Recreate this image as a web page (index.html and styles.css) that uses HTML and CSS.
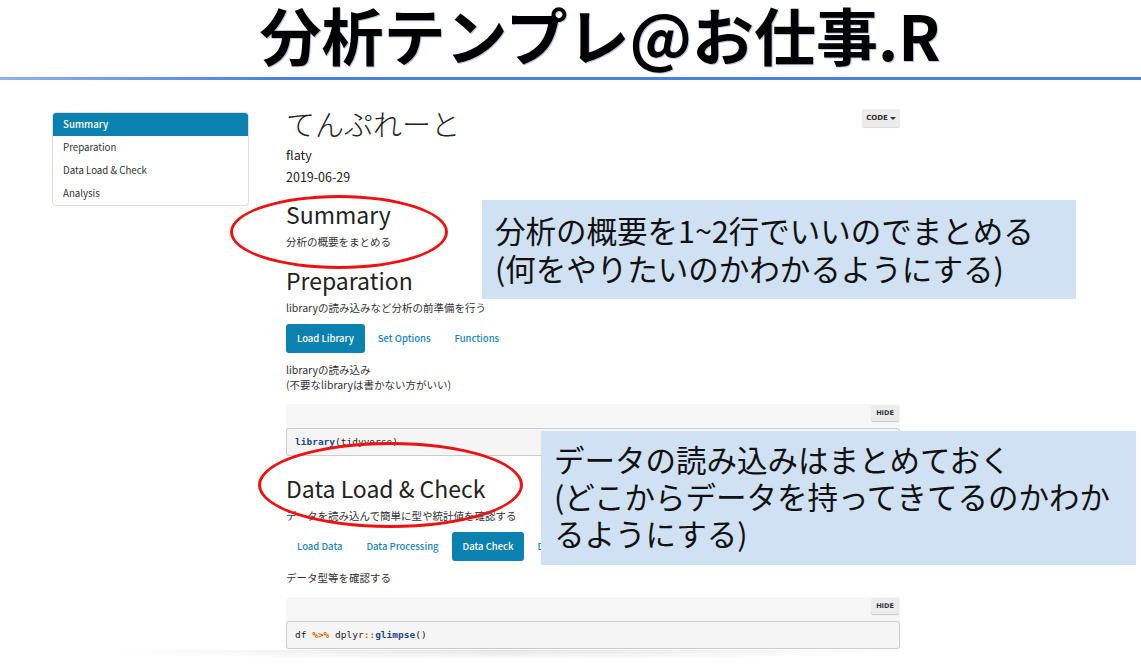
FILE: index.html
```html
<!DOCTYPE html>
<html lang="ja">
<head>
<meta charset="utf-8">
<title>分析テンプレ@お仕事.R</title>
<link rel="stylesheet" href="styles.css">
</head>
<body>
<div class="slide">
  <header class="slide-head">
    <h1 class="slide-title">分析テンプレ@お仕事.R</h1>
  </header>
  <div class="rule"></div>

  <div class="doc">
    <nav class="toc">
      <a class="toc-item active">Summary</a>
      <a class="toc-item">Preparation</a>
      <a class="toc-item">Data Load &amp; Check</a>
      <a class="toc-item">Analysis</a>
    </nav>

    <main class="content">
      <div class="title-row">
        <h1 class="doc-title">てんぷれーと</h1>
        <button class="code-btn">CODE <span class="caret"></span></button>
      </div>
      <p class="meta">flaty</p>
      <p class="meta">2019-06-29</p>

      <h2 class="sec sec-summary">Summary</h2>
      <p class="txt t-sum">分析の概要をまとめる</p>

      <h2 class="sec sec-prep">Preparation</h2>
      <p class="txt t-prep">libraryの読み込みなど分析の前準備を行う</p>
      <div class="tabs">
        <a class="tab active">Load Library</a>
        <a class="tab">Set Options</a>
        <a class="tab">Functions</a>
      </div>
      <p class="txt t-lib">libraryの読み込み<br>(不要なlibraryは書かない方がいい)</p>
      <div class="code code1">
        <div class="code-bar"><button class="hide-btn">HIDE</button></div>
        <pre class="pre"><span class="fn">library</span>(tidyverse)</pre>
      </div>

      <h2 class="sec sec-data">Data Load &amp; Check</h2>
      <p class="txt t-data">データを読み込んで簡単に型や統計値を確認する</p>
      <div class="tabs">
        <a class="tab">Load Data</a>
        <a class="tab">Data Processing</a>
        <a class="tab active">Data Check</a>
        <a class="tab">Data Summary</a>
      </div>
      <p class="txt t-type">データ型等を確認する</p>
      <div class="code code2">
        <div class="code-bar"><button class="hide-btn">HIDE</button></div>
        <pre class="pre">df <span class="op">%&gt;%</span> dplyr<span class="op">::</span><span class="fn">glimpse</span>()</pre>
      </div>
    </main>
  </div>

  <div class="ring ring1"></div>
  <div class="ring ring2"></div>

  <div class="note note1">分析の概要を1~2行でいいのでまとめる<br>(何をやりたいのかわかるようにする)</div>
  <div class="note note2">データの読み込みはまとめておく<br>(どこからデータを持ってきてるのかわか<br>るようにする)</div>
</div>
</body>
</html>
```

FILE: styles.css
```css
* { box-sizing: border-box; }

html, body {
  margin: 0;
  padding: 0;
  background: #ffffff;
}

body {
  width: 1141px;
  height: 669px;
  overflow: hidden;
  font-family: "Noto Sans CJK JP", "Noto Sans", sans-serif;
  color: #333333;
}

.slide {
  position: relative;
  width: 1141px;
  height: 669px;
  overflow: hidden;
}

/* ---------- slide header ---------- */
.slide-head {
  height: 77px;
  display: flex;
  align-items: center;
  justify-content: center;
  padding: 0 0 9px 59px;
}

.slide-title {
  margin: 0;
  font-family: "Noto Sans CJK JP", sans-serif;
  font-weight: 700;
  font-size: 62px;
  line-height: 68px;
  color: #000000;
  white-space: nowrap;
  text-shadow: 1px 1px 0 rgba(60, 90, 160, 0.35);
}

.rule {
  height: 3px;
  background: linear-gradient(to right, #8fb2ea 0%, #4a7fdc 25%, #4a7fdc 100%);
}

/* ---------- document screenshot ---------- */
.doc {
  position: relative;
  display: flex;
  align-items: flex-start;
  padding: 24px 0 0 52px;
}

.toc {
  width: 197px;
  margin-top: 8px;
  margin-right: 37px;
  border: 1px solid #dddddd;
  border-radius: 4px;
  overflow: hidden;
  flex-shrink: 0;
}

.toc-item {
  display: block;
  height: 23px;
  line-height: 23px;
  padding-left: 10px;
  font-size: 9.7px;
  color: #333333;
}

.toc-item.active {
  background: #0b81b0;
  color: #ffffff;
  font-weight: 500;
}

.content {
  width: 614px;
}

.title-row {
  display: flex;
  justify-content: space-between;
  align-items: flex-start;
  height: 38px;
}

.doc-title {
  margin: 0;
  font-size: 29px;
  line-height: 38px;
  font-weight: 300;
  color: #222222;
}

.code-btn {
  margin-top: 5px;
  height: 18px;
  width: 38px;
  padding: 0;
  border: none;
  border-radius: 2px;
  background: #ececec;
  box-shadow: 0 1px 1px rgba(0, 0, 0, 0.15);
  font-family: "DejaVu Sans", sans-serif;
  font-size: 7px;
  font-weight: bold;
  color: #333333;
  display: flex;
  align-items: center;
  justify-content: center;
  gap: 2px;
}

.caret {
  width: 0;
  height: 0;
  border-left: 3px solid transparent;
  border-right: 3px solid transparent;
  border-top: 3px solid #333333;
}

.meta {
  margin: 0;
  font-size: 12.5px;
  line-height: 22px;
  color: #222222;
}
.meta:first-of-type { margin-top: 2px; }

.sec {
  margin: 0;
  font-size: 23px;
  font-weight: 400;
  line-height: 26px;
  color: #222222;
}
.sec-summary { margin-top: 13px; }
.sec-prep { margin-top: 17px; }
.sec-data { margin-top: 19px; }

.txt {
  margin: 7px 0 0;
  font-size: 10.5px;
  line-height: 16px;
  color: #333333;
}
.t-lib { margin-top: 9px; line-height: 15px; }
.t-type { margin-top: 9px; }

.tabs {
  display: flex;
  gap: 2px;
  margin-top: 8px;
  height: 29px;
}

.tab {
  display: block;
  height: 29px;
  line-height: 29px;
  padding: 0 11px;
  border-radius: 3px;
  font-size: 9.5px;
  font-weight: 500;
  color: #1a87b8;
}

.tab.active {
  background: #0b81b0;
  color: #ffffff;
}

.code {
  background: #f6f6f6;
}
.code1 { margin-top: 12px; }
.code2 { margin-top: 11px; }

.code-bar {
  height: 24px;
  display: flex;
  justify-content: flex-end;
  align-items: flex-start;
  padding: 1px 1px 0 0;
}

.hide-btn {
  width: 28px;
  height: 16px;
  padding: 0;
  border: none;
  border-radius: 2px;
  background: #ececec;
  box-shadow: 0 1px 1px rgba(0, 0, 0, 0.18);
  font-family: "DejaVu Sans", sans-serif;
  font-size: 6.5px;
  font-weight: bold;
  color: #333333;
}

.pre {
  margin: 0;
  height: 28px;
  padding: 0 8px;
  border: 1px solid #cccccc;
  border-radius: 3px;
  background: #f5f5f5;
  font-family: "DejaVu Sans Mono", "Liberation Mono", monospace;
  font-size: 9.5px;
  line-height: 26px;
  color: #222222;
}

.fn { color: #204a87; font-weight: bold; }
.op { color: #ce5c00; font-weight: bold; }

.doc::after {
  content: "";
  position: absolute;
  left: 90px;
  top: 570px;
  width: 830px;
  height: 10px;
  background: radial-gradient(ellipse at center top, rgba(0, 0, 0, 0.10), rgba(0, 0, 0, 0) 70%);
}

/* ---------- annotations ---------- */
.ring {
  position: absolute;
  border: 3px solid #ee1111;
  border-radius: 50%;
}
.ring1 { left: 230px; top: 195px; width: 218px; height: 74px; }
.ring2 { left: 258px; top: 442px; width: 265px; height: 86px; }

.note {
  position: absolute;
  background: #cfe1f3;
  color: #111111;
  font-family: "Noto Sans CJK JP", sans-serif;
  font-size: 30.5px;
  font-weight: 400;
  white-space: nowrap;
}

.note1 {
  left: 482px;
  top: 200px;
  width: 594px;
  height: 99px;
  padding: 11px 0 0 13px;
  line-height: 38px;
}

.note2 {
  left: 541px;
  top: 431px;
  width: 595px;
  height: 134px;
  padding: 10px 0 0 13px;
  line-height: 37px;
}
```
